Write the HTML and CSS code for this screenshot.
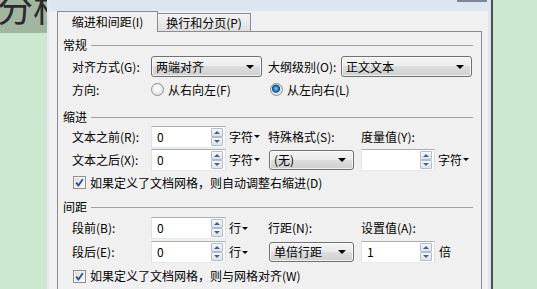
FILE: index.html
```html
<!DOCTYPE html>
<html lang="zh-CN">
<head>
    <meta charset="UTF-8">
    <title>段落</title>
    <link rel="stylesheet" href="styles.css">
</head>
<body>
<div class="screen">

    <!-- document behind the dialog -->
    <div class="doc">
        <div class="doc-head"><span class="doc-text">分析</span></div>
    </div>

    <!-- paragraph dialog -->
    <div class="dialog">
        <div class="dialog-inner">
            <div class="frame-top"><span class="close-btn"></span></div>

            <div class="tabs">
                <div class="tab active">缩进和间距(I)</div>
                <div class="tab">换行和分页(P)</div>
            </div>

            <div class="panel">

                <!-- 常规 -->
                <div class="group">
                    <div class="group-title"><span>常规</span><i class="rule"></i></div>
                    <div class="row row-general">
                        <label>对齐方式(G):</label>
                        <div class="select w-align"><span>两端对齐</span><i class="arrow"></i></div>
                        <label>大纲级别(O):</label>
                        <div class="select w-level"><span>正文文本</span><i class="arrow"></i></div>
                    </div>
                    <div class="row">
                        <label>方向:</label>
                        <div class="option"><i class="radio"></i>从右向左(F)</div>
                        <div class="option second"><i class="radio checked"></i>从左向右(L)</div>
                    </div>
                </div>

                <!-- 缩进 -->
                <div class="group group-indent">
                    <div class="group-title"><span>缩进</span><i class="rule"></i></div>
                    <div class="row">
                        <label>文本之前(R):</label>
                        <div class="field">
                            <div class="spin"><span>0</span><div class="spin-btns"><b class="up"></b><b class="down"></b></div></div>
                            <div class="unit">字符<i class="drop"></i></div>
                        </div>
                        <label>特殊格式(S):</label>
                        <label>度量值(Y):</label>
                    </div>
                    <div class="row">
                        <label>文本之后(X):</label>
                        <div class="field">
                            <div class="spin"><span>0</span><div class="spin-btns"><b class="up"></b><b class="down"></b></div></div>
                            <div class="unit">字符<i class="drop"></i></div>
                        </div>
                        <div class="select w-small"><span>(无)</span><i class="arrow"></i></div>
                        <div class="field">
                            <div class="spin w-right"><span></span><div class="spin-btns"><b class="up"></b><b class="down"></b></div></div>
                            <div class="unit">字符<i class="drop"></i></div>
                        </div>
                    </div>
                    <div class="check-row">
                        <span class="check"><svg width="9" height="9" viewBox="0 0 9 9"><path d="M1.2 4.6 L3.4 7.4 L7.8 1.2" fill="none" stroke="#2a4c8e" stroke-width="1.8"/></svg></span>
                        如果定义了文档网格，则自动调整右缩进(D)
                    </div>
                </div>

                <!-- 间距 -->
                <div class="group group-spacing">
                    <div class="group-title"><span>间距</span><i class="rule"></i></div>
                    <div class="row">
                        <label>段前(B):</label>
                        <div class="field">
                            <div class="spin"><span>0</span><div class="spin-btns"><b class="up"></b><b class="down"></b></div></div>
                            <div class="unit">行<i class="drop"></i></div>
                        </div>
                        <label>行距(N):</label>
                        <label>设置值(A):</label>
                    </div>
                    <div class="row">
                        <label>段后(E):</label>
                        <div class="field">
                            <div class="spin"><span>0</span><div class="spin-btns"><b class="up"></b><b class="down"></b></div></div>
                            <div class="unit">行<i class="drop"></i></div>
                        </div>
                        <div class="select w-small"><span>单倍行距</span><i class="arrow"></i></div>
                        <div class="field">
                            <div class="spin w-right"><span>1</span><div class="spin-btns"><b class="up"></b><b class="down"></b></div></div>
                            <div class="unit times">倍</div>
                        </div>
                    </div>
                    <div class="check-row">
                        <span class="check"><svg width="9" height="9" viewBox="0 0 9 9"><path d="M1.2 4.6 L3.4 7.4 L7.8 1.2" fill="none" stroke="#2a4c8e" stroke-width="1.8"/></svg></span>
                        如果定义了文档网格，则与网格对齐(W)
                    </div>
                </div>

            </div>
        </div>
    </div>

    <div class="doc-right"></div>
</div>
</body>
</html>
```

FILE: styles.css
```css
/* base */
* {
    margin: 0;
    padding: 0;
    box-sizing: border-box;
}

body {
    font-family: "Noto Sans CJK SC", sans-serif;
    font-size: 12px;
    line-height: 14px;
    color: #000;
    background-color: #cde8d0;
    overflow: hidden;
}

.screen {
    display: flex;
    width: 537px;
    height: 289px;
    overflow: hidden;
}

/* document */
.doc {
    width: 47px;
    flex: none;
}

.doc-head {
    height: 33px;
    background-color: #a0b6a1;
    overflow: hidden;
    white-space: nowrap;
}

.doc-text {
    display: block;
    font-size: 36px;
    line-height: 36px;
    margin: -12px 0 0 -3px;
    color: #2b2b2b;
}

.doc-right {
    flex: 1;
}

/* dialog frame */
.dialog {
    width: 446px;
    flex: none;
    border-left: 2px solid #e3e9ef;
    border-right: 2px solid #4f4f4f;
    background-color: #f0f0f0;
}

.dialog-inner {
    height: 100%;
    border-right: 3px solid #dbe5f0;
}

.frame-top {
    height: 11px;
    background-color: #dde6f0;
    display: flex;
    justify-content: flex-end;
}

.close-btn {
    width: 30px;
    height: 2px;
    margin-right: 1px;
    background-color: #7c879b;
}

/* tabs */
.tabs {
    display: flex;
    align-items: flex-end;
    height: 20px;
    padding-left: 8px;
}

.tab {
    width: 94px;
    height: 18px;
    margin-left: -1px;
    border: 1px solid #898c95;
    border-bottom: none;
    background: linear-gradient(#f4f4f4, #dedede);
    text-align: center;
    line-height: 17px;
}

.tab.active {
    width: 101px;
    height: 21px;
    margin-left: 0;
    margin-bottom: -1px;
    background: #f0f0f0;
    line-height: 19px;
    position: relative;
    z-index: 1;
}

.panel {
    width: 425px;
    height: 300px;
    margin-left: 8px;
    border: 1px solid #898c95;
    padding: 6px 8px 0 5px;
}

/* groups */
.group-title {
    display: flex;
    align-items: center;
    height: 14px;
}

.rule {
    flex: 1;
    height: 1px;
    margin-left: 4px;
    background-color: #a0a0a0;
}

.group-title + .row {
    margin-top: 3px;
}

.group-indent {
    margin-top: 9px;
}

.group-indent .group-title + .row {
    margin-top: 1px;
}

.group-spacing {
    margin-top: 6px;
}

.group-spacing .group-title + .row {
    margin-top: 2px;
}

.group-spacing .row,
.group-spacing .check-row {
    height: 24px;
}

.row {
    display: grid;
    grid-template-columns: 79px 117px 93px 1fr;
    align-items: center;
    height: 23px;
    padding-left: 9px;
}

.row-general {
    grid-template-columns: 79px 117px 73px 131px;
}

.field {
    display: flex;
    align-items: center;
}

/* combo boxes */
.select {
    display: flex;
    align-items: center;
    height: 21px;
    padding: 0 7px 0 4px;
    border: 1px solid #707070;
    border-radius: 3px;
    background: linear-gradient(#f3f3f3 0%, #ebebeb 50%, #dddddd 50%, #cfcfcf 100%);
    box-shadow: inset 0 0 0 1px rgba(255, 255, 255, 0.7);
}

.select span {
    flex: 1;
}

.w-align {
    width: 111px;
}

.w-level {
    width: 131px;
}

.w-small {
    width: 85px;
    height: 20px;
    margin-left: 1px;
}

.arrow {
    width: 0;
    height: 0;
    border-left: 4px solid transparent;
    border-right: 4px solid transparent;
    border-top: 4px solid #000;
}

/* spin boxes */
.spin {
    display: flex;
    width: 75px;
    height: 22px;
    background-color: #fff;
    border: 1px solid;
    border-color: #abadb3 #dbdfe6 #e3e9ef #e2e3ea;
}

.spin.w-right {
    width: 74px;
}

.spin span {
    flex: 1;
    padding-left: 5px;
    line-height: 20px;
}

.spin-btns {
    width: 12px;
    margin: 1px 2px 1px 0;
    display: flex;
    flex-direction: column;
}

.spin-btns b {
    flex: 1;
    display: flex;
    align-items: center;
    justify-content: center;
    border: 1px solid #b3bdc9;
    border-radius: 1px;
    background: linear-gradient(#f6f8fb, #dde3ea);
}

.spin-btns b::after {
    content: "";
    width: 0;
    height: 0;
    border-left: 3px solid transparent;
    border-right: 3px solid transparent;
}

.spin-btns .up::after {
    border-bottom: 3px solid #4a5f82;
}

.spin-btns .down::after {
    border-top: 3px solid #4a5f82;
}

.unit {
    display: flex;
    align-items: center;
    margin-left: 3px;
}

.unit.times {
    margin-left: 4px;
}

.drop {
    width: 0;
    height: 0;
    margin-left: 1px;
    border-left: 3px solid transparent;
    border-right: 3px solid transparent;
    border-top: 3px solid #000;
}

/* radios and checks */
.option {
    display: flex;
    align-items: center;
    gap: 4px;
}

.option.second {
    grid-column: 3 / 5;
    margin-left: 2px;
}

.radio {
    width: 13px;
    height: 13px;
    border-radius: 50%;
    border: 1px solid #8e8f8f;
    background: radial-gradient(circle at 45% 40%, #ffffff 0%, #e8e8e8 60%, #cfcfcf 100%);
}

.radio.checked {
    background: radial-gradient(circle at 45% 42%, #9fe0fb 0%, #2b8bd2 22%, #164a8c 42%, #dcdcdc 50%, #f4f4f4 100%);
}

.check-row {
    display: flex;
    align-items: center;
    gap: 4px;
    height: 23px;
    padding-left: 10px;
}

.check {
    display: flex;
    align-items: center;
    justify-content: center;
    width: 13px;
    height: 13px;
    border: 1px solid #8e8f8f;
    background: linear-gradient(135deg, #d8d8d8, #ffffff);
    box-shadow: inset 0 0 0 1px #f4f4f4;
}
```
